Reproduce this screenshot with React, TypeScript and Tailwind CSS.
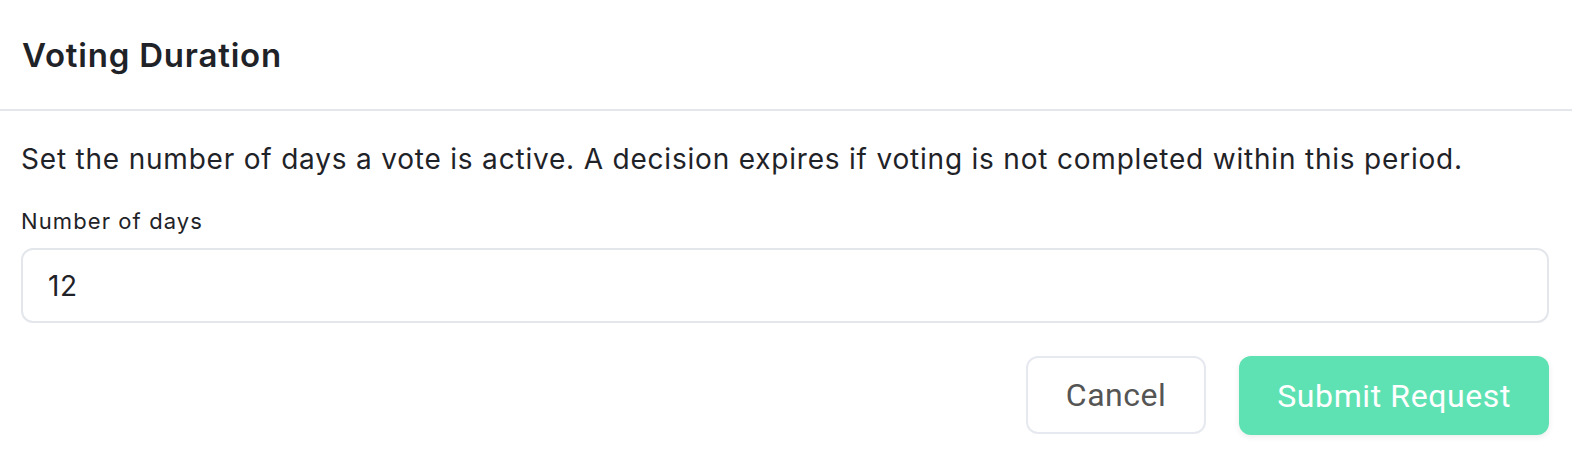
import React, { useState } from 'react';

export default function App() {
  const [days, setDays] = useState('12');

  return (
    <div className="w-[1572px] h-[460px] bg-white" style={{ fontFamily: 'Inter, "Noto Sans", sans-serif' }}>
      <div className="h-[111px] flex items-center px-[22px] border-b-2 border-[#e3e6eb]">
        <h2 className="text-[33px] leading-[40px] font-semibold tracking-[0.8px] text-[#1f2328]">Voting Duration</h2>
      </div>

      <div className="pl-[21px] pr-[23px] pt-[28px]">
        <p className="text-[28px] leading-[40px] tracking-[0.8px] text-[#1f2328]">
          Set the number of days a vote is active. A decision expires if voting is not completed within this period.
        </p>

        <label className="block mt-[27px] text-[22px] leading-[30px] tracking-[1.1px] text-[#1f2328]">Number of days</label>
        <input
          type="text"
          value={days}
          onChange={(e) => setDays(e.target.value)}
          className="mt-[12px] w-full h-[75px] px-[25px] text-[28px] tracking-[0.5px] text-[#1f2328] border-2 border-[#e3e6eb] rounded-[12px] focus:outline-none"
        />

        <div className="flex justify-end gap-[33px] mt-[33px]" style={{ fontFamily: 'Roboto, "Noto Sans", sans-serif' }}>
          <button className="h-[78px] px-[38px] text-[32px] tracking-[0.5px] text-[#555555] bg-white border-2 border-[#e6e9ef] rounded-[12px]">
            Cancel
          </button>
          <button className="h-[79px] px-[38px] text-[32px] tracking-[0.6px] text-white bg-[#5ee2b3] rounded-[12px] shadow-[0_2px_6px_rgba(0,0,0,0.08)]">
            Submit Request
          </button>
        </div>
      </div>
    </div>
  );
}
